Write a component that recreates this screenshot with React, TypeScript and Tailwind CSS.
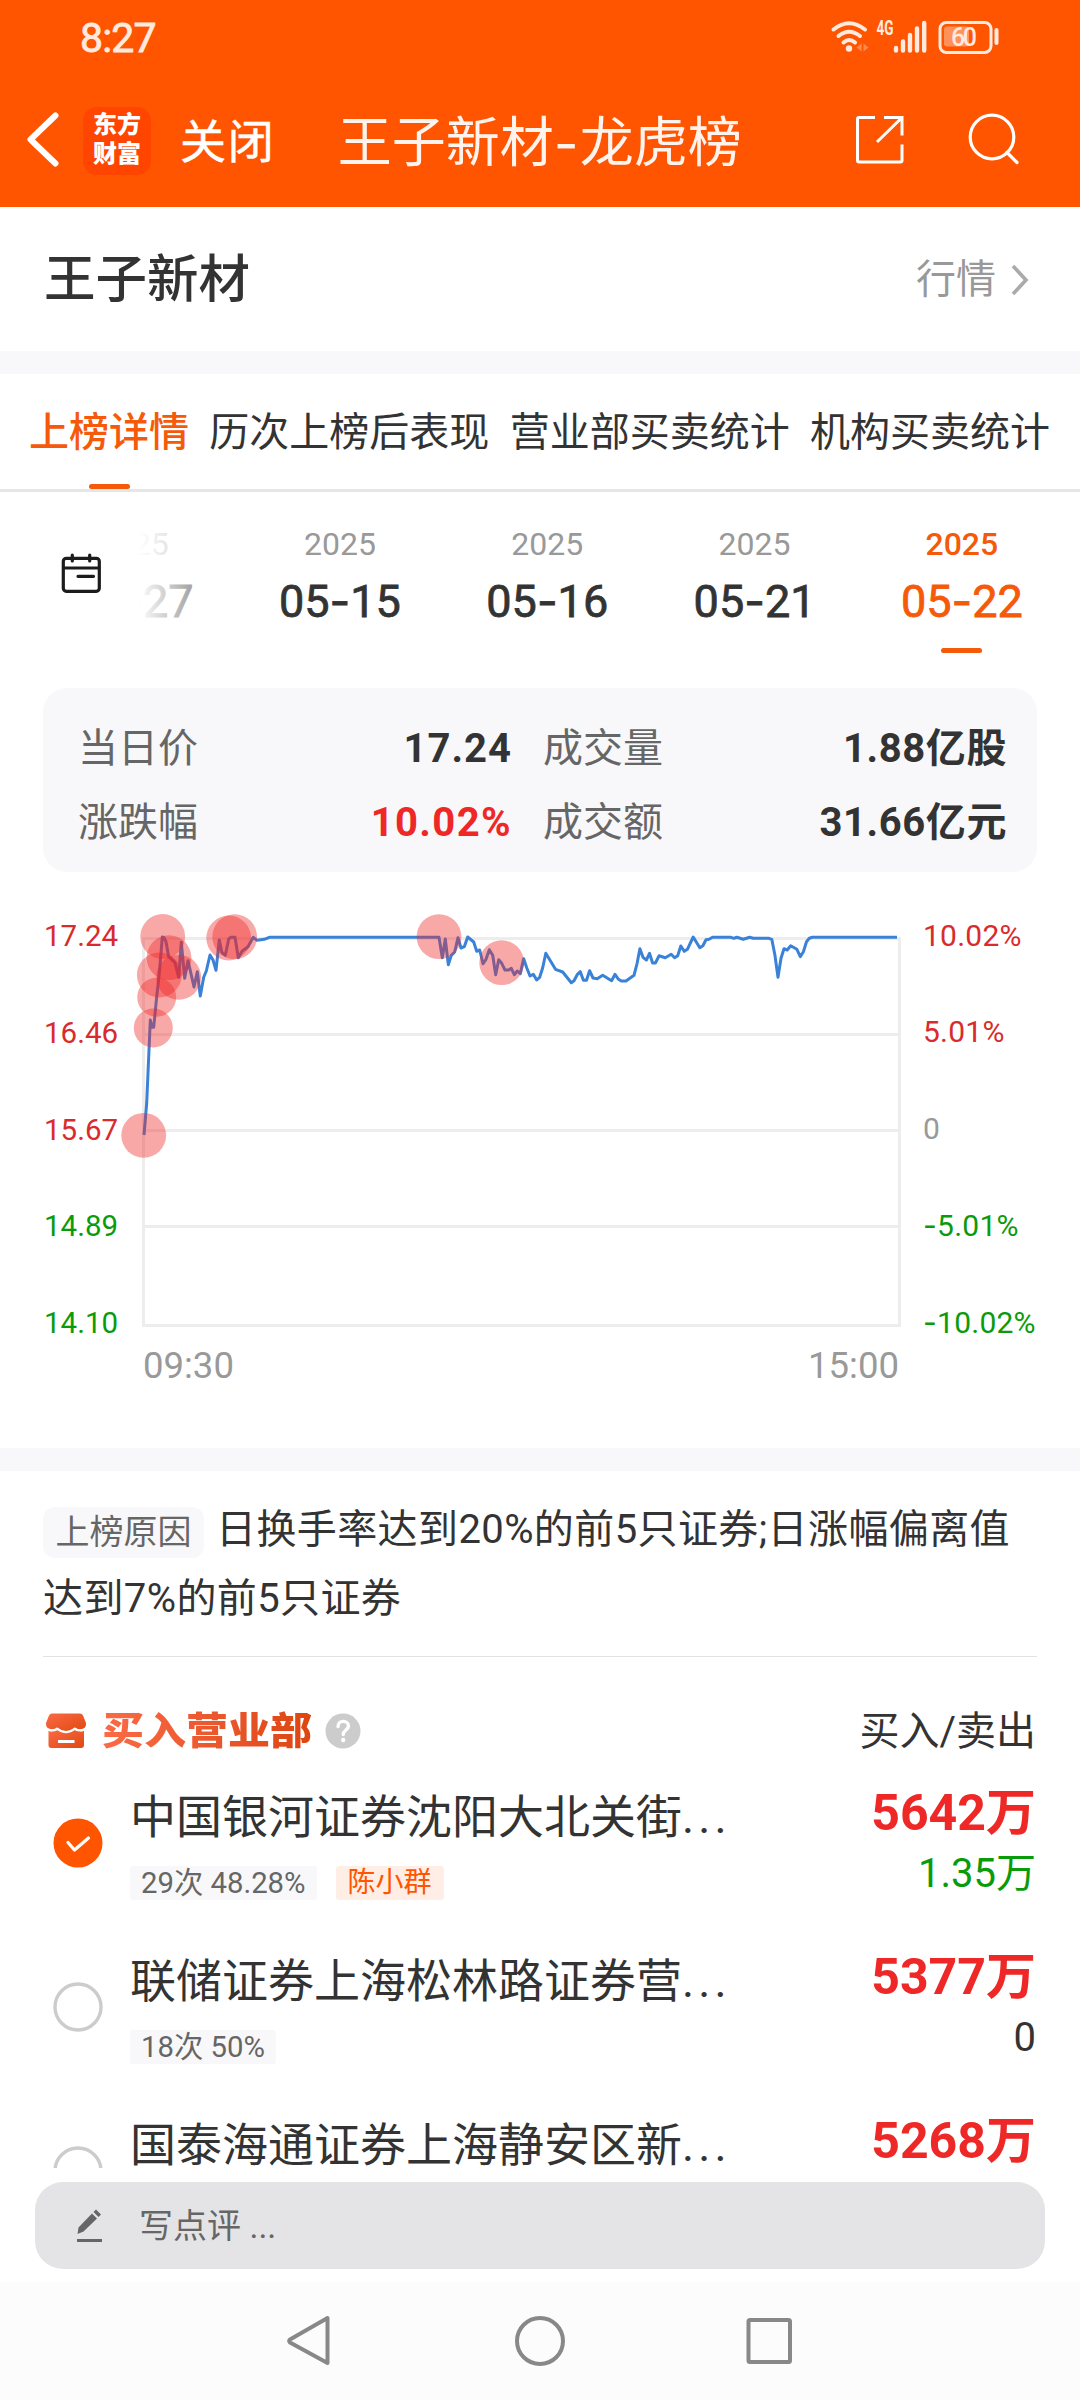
import { clsx } from "clsx";

const tabs = ["上榜详情", "历次上榜后表现", "营业部买卖统计", "机构买卖统计"];

const dates = [
  { year: "2025", day: "04-27" },
  { year: "2025", day: "05-15" },
  { year: "2025", day: "05-16" },
  { year: "2025", day: "05-21" },
  { year: "2025", day: "05-22", active: true },
];

const prices = [
  { value: "17.24", color: "text-[#d92b2b]" },
  { value: "16.46", color: "text-[#d92b2b]" },
  { value: "15.67", color: "text-[#d92b2b]" },
  { value: "14.89", color: "text-[#0a9b0a]" },
  { value: "14.10", color: "text-[#0a9b0a]" },
];

const percents = [
  { value: "10.02%", color: "text-[#d92b2b]" },
  { value: "5.01%", color: "text-[#d92b2b]" },
  { value: "0", color: "text-[#999999]" },
  { value: "-5.01%", color: "text-[#0a9b0a]" },
  { value: "-10.02%", color: "text-[#0a9b0a]" },
];

const brokers = [
  {
    name: "中国银河证券沈阳大北关街...",
    stat: "29次 48.28%",
    trader: "陈小群",
    buy: "5642万",
    sell: "1.35万",
    sellColor: "text-[#0a9b0a]",
    checked: true,
  },
  {
    name: "联储证券上海松林路证券营...",
    stat: "18次 50%",
    buy: "5377万",
    sell: "0",
    sellColor: "text-[#333333]",
  },
  {
    name: "国泰海通证券上海静安区新...",
    buy: "5268万",
  },
];

const pricePoints =
  "144,1135 146.7,1103 150.3,1020 152,1027.3 153.7,1027.3 156.7,996.7 159.3,973.3 162.3,937 164,937.7 166,941.7 168.7,956.7 175,962.7 178.7,977.3 181.3,942.3 184.7,978.3 188,960.7 194,987 197.3,971.7 200.3,996 203.7,977.3 206.3,971 210,955 213,960 216,970.3 219.3,940 222,952.7 225.3,955.3 228.7,939 230.7,937.3 235,937.3 238.3,957.7 242,951.3 248,946.7 253.3,937.3 257,940.3 264.3,939.3 269.3,937.3 439,937.3 442.3,957.7 445.3,939 448.3,964.7 451.3,955.3 454.7,952 458,937.7 461,948 464.3,946.7 467.7,937 473.7,942 476.7,951.3 479.7,950 483,963.7 486,959.3 489.3,949.7 492.7,955.3 495.7,974.7 498.7,959.7 501.7,963.3 505,970 508.7,970 511.3,968.3 514.3,974.7 517.3,971 520.3,973.7 523.7,958.7 526.7,967.7 530,976 533.3,974.3 536.7,980 539.7,977.3 542.7,967.7 545.8,953.3 555.5,969.3 562.7,972 571.3,982.7 574,980.7 577.2,974.7 580.3,971.7 583.4,980.3 586.5,980.3 589.6,970.7 593,978 597.2,978.7 602.7,975.3 611.6,980.7 615,974.3 618.5,979.3 621.3,981 626,981 634,975.3 637.1,963.3 639.9,948.7 643,957.3 646.4,960 649.5,953.3 652.6,963 655.4,963 659.1,955.7 665.3,957.7 671.2,954.3 674.6,957.7 677.7,955.7 680.8,946 684.3,951.3 687.4,949.3 693.2,937 699.8,947.7 702.9,945.7 706,939.7 709,939.3 712.5,937.3 731,937.3 733.9,938.3 737,937.3 743.2,939.3 749.7,937.3 753.2,938.3 769,938.3 771.8,939.3 774.9,955 778,977.3 781,958.3 784,948.7 787.2,950 790.7,945.7 796.9,949.3 800.3,956.7 803.4,951.7 806.5,941.7 809.3,938.3 812.4,937.3 897,937.3";

const bubbles = [
  [143.7, 1135.3, 22.4],
  [153.3, 1028, 19.5],
  [156.7, 997.3, 19.5],
  [159.3, 975, 22.4],
  [162.7, 936.5, 22.4],
  [169, 957.7, 22.4],
  [178.7, 977.3, 22.4],
  [228.7, 938, 22.4],
  [234.7, 936.7, 22.4],
  [439, 936.7, 22.4],
  [501.7, 962.7, 22.4],
];

// Inter's hyphen is wider than Roboto's
const Dashed = ({ text }: { text: string }) => {
  const [before, after] = text.split("-");
  if (after === undefined) return <>{text}</>;
  return (
    <>
      {before}
      <span className="font-[Inter,sans-serif]">-</span>
      {after}
    </>
  );
};

const StatusBar = () => (
  <div className="flex h-[76px] items-center justify-between pl-[80px] pr-[80px] text-[#ffeadf]">
    <span className="text-[41px] leading-none tracking-[-0.02em] [-webkit-text-stroke:0.8px]">8:27</span>
    <svg className="h-[60px] w-[170px]" viewBox="830 8 170 60" fill="none">
      <g stroke="currentColor" strokeWidth="4" strokeLinecap="round">
        <path d="M833.500 29.500Q849 17 865 29.500" />
        <path d="M838.500 36Q849 27.500 860 36" />
        <path d="M843.500 42.500Q849 37.500 855 42.500" />
      </g>
      <circle cx="849" cy="48.500" r="3.200" fill="currentColor" />
      <path d="M861.500 43.500v8l-5-4zM863.500 43.500v8l5-4z" fill="currentColor" opacity=".35" />
      <text
        x="876.500"
        y="35"
        fill="currentColor"
        fontSize="20"
        fontWeight="700"
        textLength="17"
        lengthAdjust="spacingAndGlyphs"
      >
        4G
      </text>
      <g stroke="currentColor" strokeWidth="4.400" strokeLinecap="round">
        <path d="M896 48v2.500M903 41.500v9M910 35v15.500M917 28.500v22M924.200 23v27.500" />
      </g>
      <rect x="940" y="22.500" width="51" height="30" rx="6.500" stroke="currentColor" strokeWidth="3" />
      <rect x="944" y="26.500" width="25" height="20" rx="3" fill="currentColor" opacity=".4" />
      <path d="M996.500 30v13" stroke="currentColor" strokeWidth="4" strokeLinecap="round" />
      <text x="951" y="46" fill="currentColor" fontSize="25" fontWeight="500" textLength="26">
        60
      </text>
    </svg>
  </div>
);

const TitleBar = () => (
  <div className="flex h-[131px] items-center pb-[2px] text-white">
    <svg className="ml-[22px] h-[60px] w-[42px]" viewBox="22 111 42 60" fill="none">
      <path
        d="M55.500 115.500L30.500 139.500L55.500 163.500"
        stroke="currentColor"
        strokeWidth="6"
        strokeLinecap="round"
        strokeLinejoin="round"
      />
    </svg>
    <div className="ml-[19px] flex h-[68px] w-[68px] flex-col items-center justify-center rounded-[14px] bg-[#ff4500] pb-[2px] text-[24px] leading-[29px] font-black">
      <span>东方</span>
      <span>财富</span>
    </div>
    <span className="ml-[29px] mt-[3px] text-[46px] leading-none tracking-[0.04em] [-webkit-text-stroke:0.5px]">
      关闭
    </span>
    <h1 className="ml-[62px] mt-[6px] flex text-[54px] leading-none text-[#fff3ee]">
      王子新材<span className="w-[26px] font-[Inter,sans-serif]">-</span>龙虎榜
    </h1>
    <svg className="ml-[109px] h-[60px] w-[56px]" viewBox="850 111 56 60" fill="none">
      <g stroke="currentColor" strokeWidth="3">
        <path d="M874 117.500H858Q856.500 117.500 856.500 119V160.500Q856.500 162 858 162H899.500Q901 162 901 160.500V144.500" />
        <path d="M883 117.500H901V135.500M876 142L901 117.500" />
      </g>
    </svg>
    <svg className="ml-[58px] h-[60px] w-[60px]" viewBox="964 111 60 60" fill="none">
      <g stroke="currentColor" strokeWidth="3.200" strokeLinecap="round">
        <circle cx="991" cy="137" r="21.800" />
        <path d="M1006 152.500L1016 162.500" />
      </g>
    </svg>
  </div>
);

const DatePicker = () => (
  <div className="relative flex h-[196px] shrink-0 overflow-hidden">
    <div className="z-10 flex w-[138px] shrink-0 bg-white pl-[59px] pt-[58px]">
      <svg className="h-[46px] w-[46px]" viewBox="59 550 46 46" fill="none">
        <g stroke="#1c1c1c" strokeWidth="3.200" strokeLinecap="round">
          <rect x="63.300" y="558.300" width="36" height="33" rx="3" />
          <path d="M64 568H99M72.300 555v6M89.700 555v6M78 576.300H93.500" />
        </g>
      </svg>
    </div>
    <div className="-ml-[109px] flex">
      {dates.map((date) => (
        <div key={date.day} className="flex w-[207.300px] flex-col items-center pt-[36px]">
          <span
            className={clsx(
              "text-[32px] leading-8",
              date.active ? "font-medium text-[#f55a0a]" : "text-[#999999]"
            )}
          >
            {date.year}
          </span>
          <span
            className={clsx(
              "mt-[13px] text-[45px] leading-[56px] [-webkit-text-stroke:0.8px]",
              date.active ? "text-[#f55a0a]" : "text-[#333333]"
            )}
          >
            <Dashed text={date.day} />
          </span>
          {date.active && <i className="mt-[18px] h-[5px] w-[41px] rounded-full bg-[#f55a0a]" />}
        </div>
      ))}
    </div>
    <div className="absolute inset-y-0 left-[138px] w-[120px] bg-linear-to-r from-white to-transparent" />
  </div>
);

const Stats = () => (
  <div className="mx-[43px] grid h-[184px] shrink-0 grid-cols-[433px_463px] content-center gap-x-[32px] rounded-[24px] bg-[#f8f8fa] px-[35px] pt-[12px] text-[40px] leading-[74px] text-[#666666]">
    <div className="flex justify-between">
      <span>当日价</span>
      <b className="-mr-[1px] tracking-[0.025em] text-[#333333]">17.24</b>
    </div>
    <div className="flex justify-between">
      <span>成交量</span>
      <b className="-mr-[1px] tracking-[0.015em] text-[#333333]">1.88亿股</b>
    </div>
    <div className="flex justify-between">
      <span>涨跌幅</span>
      <b className="-mr-[1px] tracking-[0.035em] text-[#ee2727]">10.02%</b>
    </div>
    <div className="flex justify-between">
      <span>成交额</span>
      <b className="-mr-[1px] tracking-[0.015em] text-[#333333]">31.66亿元</b>
    </div>
  </div>
);

const Chart = () => (
  <div className="flex h-[576px] shrink-0 pt-[33px]">
    <div className="ml-[44px] flex h-[434px] w-[74px] flex-col justify-between pt-[15px]">
      {prices.map((p) => (
        <span key={p.value} className={clsx("text-[29.500px] leading-8", p.color)}>
          {p.value}
        </span>
      ))}
    </div>
    <div className="w-[787px]">
      <svg className="h-[430px] w-[787px]" viewBox="118 905 787 430" fill="none">
        <g stroke="#ededed" strokeWidth="3">
          <path d="M142 938.500H901M142 1034.500H901M142 1130.500H901M142 1226.500H901M142 1325.500H901" />
          <path d="M143.500 937V1327M899.500 937V1325" />
        </g>
        <polyline points={pricePoints} stroke="#3a82d8" strokeWidth="3" strokeLinejoin="round" />
        {bubbles.map(([cx, cy, r]) => (
          <circle key={cx} cx={cx} cy={cy} r={r} fill="#f02525" fillOpacity=".4" />
        ))}
      </svg>
      <div className="mt-[13px] flex justify-between pl-[25px] pr-[6px] text-[36.500px] leading-9 text-[#999999]">
        <span>09:30</span>
        <span>15:00</span>
      </div>
    </div>
    <div className="ml-[18px] flex h-[434px] flex-col justify-between pt-[15px]">
      {percents.map((p) => (
        <span
          key={p.value}
          className={clsx("text-[30px] leading-8 tracking-[0.008em] whitespace-nowrap", p.color)}
        >
          <Dashed text={p.value} />
        </span>
      ))}
    </div>
  </div>
);

const SectionHeader = () => (
  <div className="flex h-[104px] shrink-0 items-center pl-[44px] pr-[44px] pt-[44px]">
    <svg className="h-[40px] w-[44px]" viewBox="44 1711 44 40">
      <defs>
        <linearGradient id="shop" x1="0" y1="0" x2="1" y2="1">
          <stop offset="0" stopColor="#fa6a45" />
          <stop offset="1" stopColor="#e04810" />
        </linearGradient>
      </defs>
      <path
        d="M52 1713.500H80Q82 1713.500 83 1715.500L86 1723Q86.500 1728 82 1729Q78 1730 75 1727.500L72 1730.500Q66 1733.500 60 1730.500L57 1727.500Q54 1730 50 1729Q45.500 1728 46 1723L49 1715.500Q50 1713.500 52 1713.500Z"
        fill="url(#shop)"
      />
      <path
        d="M48.500 1731Q54 1731.500 57 1730Q66 1736.500 75 1730Q79 1731.500 84 1731V1745Q84 1748 81 1748H51.500Q48.500 1748 48.500 1745Z"
        fill="url(#shop)"
      />
      <path
        d="M48 1729.500Q54 1732 57.500 1728.800Q66 1735.500 74.500 1728.800Q78 1732 84.500 1729.500"
        stroke="#fff"
        strokeWidth="2"
        fill="none"
      />
      <rect x="58" y="1740" width="16.500" height="3" fill="#fff" />
    </svg>
    <h2 className="ml-[14px] scale-y-90 bg-linear-to-r from-[#fa6a45] to-[#dd460f] bg-clip-text text-[42px] leading-[50px] font-black text-transparent">
      买入营业部
    </h2>
    <svg className="ml-[13px] h-[36px] w-[36px]" viewBox="0 0 36 36" fill="none">
      <circle cx="18" cy="18" r="17.500" fill="#cccccc" />
      <path
        d="M13 13.500C13 6.500 23.500 7 23.500 13C23.500 17 18.200 17 18.200 21.500"
        stroke="#fff"
        strokeWidth="3.400"
        strokeLinecap="round"
      />
      <circle cx="18.200" cy="27" r="2.200" fill="#fff" />
    </svg>
    <span className="mt-[2px] ml-auto text-[40px] leading-[50px] text-[#333333]">买入/卖出</span>
  </div>
);

const BrokerRow = ({ broker }: { broker: (typeof brokers)[number] }) => (
  <div className="flex h-[164px] shrink-0 pl-[53px] pr-[44px]">
    <svg className="mt-[57px] h-[50px] w-[50px]" viewBox="0 0 50 50" fill="none">
      {broker.checked ? (
        <>
          <circle cx="25" cy="25" r="24.500" fill="#ff5500" />
          <path
            d="M15 24.500L21.500 32L35.500 20"
            stroke="#fff"
            strokeWidth="3.200"
            strokeLinecap="round"
            strokeLinejoin="round"
          />
        </>
      ) : (
        <circle cx="25" cy="25" r="23" stroke="#cccccc" strokeWidth="3.400" />
      )}
    </svg>
    <div className="ml-[27px] pt-[26px]">
      <p className="text-[46px] leading-[60px] whitespace-nowrap text-[#333333]">
        {broker.name.replace("...", "")}
        <span className="tracking-[0.09em]">...</span>
      </p>
      {broker.stat && (
        <div className="mt-[19px] flex gap-[19px] leading-[34px]">
          <span className="rounded-[3px] bg-[#f8f8fa] px-[11px] text-[29.300px] text-[#666666]">
            {broker.stat}
          </span>
          {broker.trader && (
            <span className="rounded-[3px] bg-[#ffeee5] px-[12px] text-[28px] text-[#ff5500]">
              {broker.trader}
            </span>
          )}
        </div>
      )}
    </div>
    <div className="ml-auto flex flex-col items-end pt-[24px]">
      <b className="text-[50px] leading-[56px] text-[#ee2727]">{broker.buy}</b>
      {broker.sell && (
        <span className={clsx("mt-[13px] text-[40px] leading-10", broker.sellColor)}>{broker.sell}</span>
      )}
    </div>
  </div>
);

const CommentBar = () => (
  <div className="mx-[35px] mt-[14px] flex h-[87px] shrink-0 items-center rounded-[28px] bg-[#e4e4e6] pl-[40px] text-[#666666]">
    <svg className="h-[36px] w-[30px]" viewBox="75 2208 30 36" fill="currentColor">
      <path d="M77.500 2234L78.500 2227.500L92 2213.500L97 2218.500L83.500 2231.500ZM93.500 2212L96 2209.500L101 2214.500L98.500 2217Z" />
      <rect x="77" y="2239" width="25" height="3" />
    </svg>
    <span className="ml-[34px] text-[34px] leading-none">写点评 ...</span>
  </div>
);

const NavBar = () => (
  <div className="flex h-[118px] shrink-0 items-center justify-center bg-[#fcfcfc]">
    <svg className="h-[60px] w-[520px]" viewBox="280 2311 520 60" fill="none">
      <g stroke="#888888" strokeWidth="4" strokeLinejoin="round">
        <path d="M327.500 2318V2363L290 2342.500Q288.500 2341 290 2339.500Z" />
        <circle cx="540" cy="2341" r="23" />
        <rect x="748.500" y="2320" width="41.500" height="42" rx="1.500" />
      </g>
    </svg>
  </div>
);

export default function App() {
  return (
    <div className="flex h-[2400px] w-[1080px] flex-col overflow-hidden bg-white font-[Roboto,'Noto_Sans_CJK_SC',sans-serif]">
      <header className="h-[207px] shrink-0 bg-[#ff5500]">
        <StatusBar />
        <TitleBar />
      </header>

      <main className="flex h-[1961px] shrink-0 flex-col overflow-hidden">
        <div className="flex h-[144px] shrink-0 items-center justify-between pl-[44px] pr-[50px] pt-[2px]">
          <h2 className="text-[51.500px] leading-none font-medium text-[#333333]">王子新材</h2>
          <div className="flex items-center text-[40px] leading-none text-[#999999]">
            行情
            <svg className="ml-[12px] h-[34px] w-[22px]" viewBox="0 0 22 34" fill="none">
              <path d="M5 3L18 17L5 31" stroke="#aaaaaa" strokeWidth="3.600" />
            </svg>
          </div>
        </div>
        <div className="h-[23px] shrink-0 bg-[#f8f8fa]" />

        <nav className="flex h-[118px] shrink-0 justify-between border-b-3 border-[#e6e6e6] pl-[29px] pr-[30px] text-[40px] text-[#333333]">
          {tabs.map((tab, index) => (
            <div key={tab} className="flex flex-col items-center pt-[28px]">
              <span className={clsx("leading-[62px]", index === 0 && "font-medium text-[#f55a0a]")}>
                {tab}
              </span>
              {index === 0 && <i className="mt-[20px] h-[5px] w-[41px] rounded-full bg-[#f55a0a]" />}
            </div>
          ))}
        </nav>

        <DatePicker />
        <Stats />
        <Chart />
        <div className="h-[23px] shrink-0 bg-[#f8f8fa]" />

        <section className="mx-[43px] h-[186px] shrink-0 border-b border-[#e2e2e2] pt-[24px]">
          <p className="text-[40px] leading-[69px] tracking-[0.01em] text-[#333333]">
            <span className="mr-[12px] inline-block rounded-[12px] bg-[#f8f8fa] px-[12.500px] align-[-1px] text-[34px] leading-[51px] tracking-normal text-[#666666]">
              上榜原因
            </span>
            日换手率达到20%的前5只证券;日涨幅偏离值达到7%的前5只证券
          </p>
        </section>

        <SectionHeader />
        {brokers.map((broker) => (
          <BrokerRow key={broker.name} broker={broker} />
        ))}
      </main>

      <CommentBar />
      <div className="h-[13px] shrink-0" />
      <NavBar />
    </div>
  );
}
